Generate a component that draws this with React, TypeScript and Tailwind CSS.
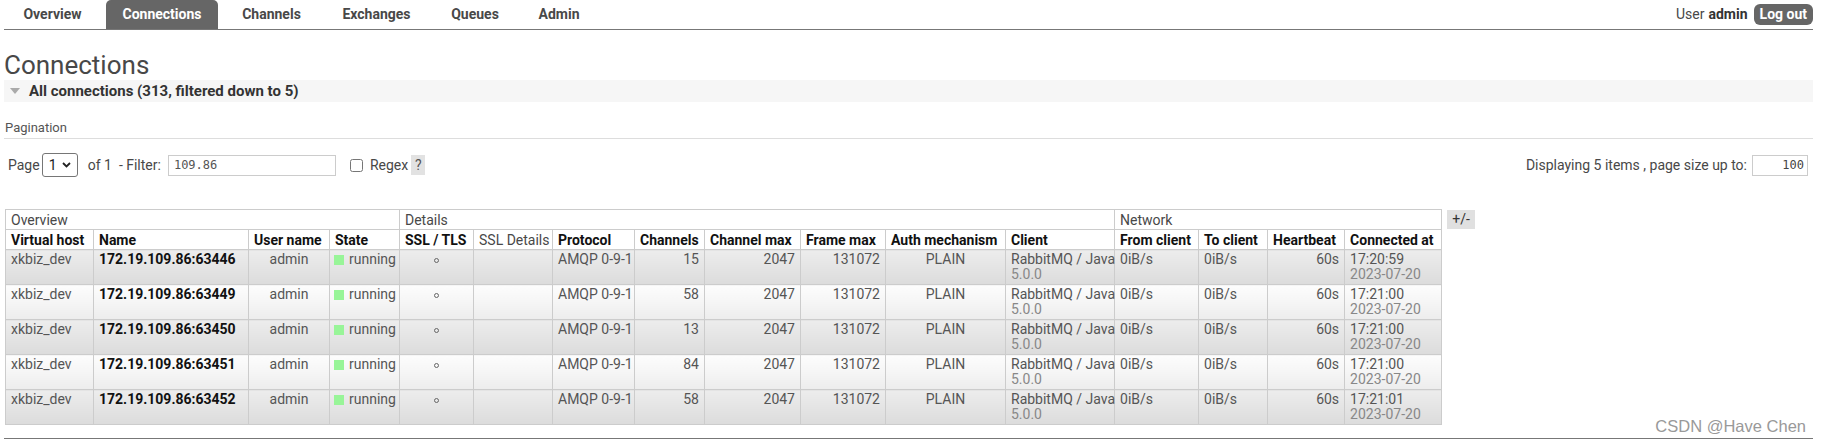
import React from 'react';

const tabs = [
  { label: 'Overview', cls: 'w-[95px]' },
  { label: 'Connections', cls: 'w-[112px] bg-[#666] text-white rounded-t-[5px]' },
  { label: 'Channels', cls: 'w-[95px]' },
  { label: 'Exchanges', cls: 'w-[103px]' },
  { label: 'Queues', cls: 'w-[82px]' },
  { label: 'Admin', cls: 'w-[74px]' },
];

const cols = [88, 155, 81, 70, 74, 79, 82, 70, 96, 85, 120, 109, 84, 69, 77, 97];

const rows = [
  { port: '63446', ch: '15', time: '17:20:59' },
  { port: '63449', ch: '58', time: '17:21:00' },
  { port: '63450', ch: '13', time: '17:21:00' },
  { port: '63451', ch: '84', time: '17:21:00' },
  { port: '63452', ch: '58', time: '17:21:01' },
];

const headers: { label: string; bold: boolean }[] = [
  { label: 'Virtual host', bold: true },
  { label: 'Name', bold: true },
  { label: 'User name', bold: true },
  { label: 'State', bold: true },
  { label: 'SSL / TLS', bold: true },
  { label: 'SSL Details', bold: false },
  { label: 'Protocol', bold: true },
  { label: 'Channels', bold: true },
  { label: 'Channel max', bold: true },
  { label: 'Frame max', bold: true },
  { label: 'Auth mechanism', bold: true },
  { label: 'Client', bold: true },
  { label: 'From client', bold: true },
  { label: 'To client', bold: true },
  { label: 'Heartbeat', bold: true },
  { label: 'Connected at', bold: true },
];

export default function App() {
  return (
    <div className="relative w-[1827px] h-[442px] overflow-hidden bg-white pl-[4px] pr-[14px] font-['Roboto',sans-serif] text-[14px] text-[#484848]">
      {/* Top navigation */}
      <div className="flex h-[30px] items-start justify-between border-b border-[#777]">
        <ul className="flex gap-[6px] pl-[1px] font-bold">
          {tabs.map((t) => (
            <li key={t.label} className={`flex h-[29px] items-center justify-center ${t.cls}`}>
              {t.label}
            </li>
          ))}
        </ul>
        <div className="flex h-[29px] items-center">
          <span>User</span>
          <span className="ml-[4px] font-bold text-[#333]">admin</span>
          <span className="ml-[6px] h-[21px] rounded-[6px] bg-[#666] px-[6px] font-bold leading-[21px] text-white">
            Log out
          </span>
        </div>
      </div>

      {/* Title */}
      <h1 className="mt-[20px] h-[30px] text-[26px] leading-[30px] font-normal text-[#484848]">Connections</h1>

      {/* Section bar */}
      <div className="flex h-[22px] items-center bg-[#f6f6f6]">
        <span className="ml-[6px] h-0 w-0 border-x-[5px] border-t-[6px] border-x-transparent border-t-[#aaa]" />
        <span className="ml-[9px] text-[15px] font-bold text-[#333]">All connections (313, filtered down to 5)</span>
      </div>

      {/* Pagination label */}
      <div className="mt-[18px] border-b border-[#ddd] pb-[2px] pl-[1px] text-[13px] leading-[16px] text-[#555]">
        Pagination
      </div>

      {/* Pagination row */}
      <div className="mt-[14px] flex h-[24px] items-center justify-between">
        <div className="flex items-center pl-[4px]">
          <span>Page</span>
          <div className="ml-[2px] flex h-[24px] w-[36px] items-center justify-between rounded-[3px] border border-[#767676] px-[6px] text-[#222]">
            <span>1</span>
            <svg width="9" height="6" viewBox="0 0 9 6" fill="none">
              <path d="M1 1l3.5 3.5L8 1" stroke="#222" strokeWidth="1.8" />
            </svg>
          </div>
          <span className="ml-[10px]">of 1</span>
          <span className="ml-[7px]">- Filter:</span>
          <div className="ml-[7px] flex h-[21px] w-[168px] items-center border border-[#ccc] px-[5px] font-['DejaVu_Sans_Mono',monospace] text-[12px] text-[#555]">
            109.86
          </div>
          <input type="checkbox" readOnly className="ml-[14px] h-[13px] w-[13px]" />
          <span className="ml-[7px]">Regex</span>
          <span className="ml-[3px] flex h-[20px] w-[14px] items-center justify-center bg-[#e2e2e2] text-[#555]">?</span>
        </div>
        <div className="flex items-center">
          <span>Displaying 5 items , page size up to:</span>
          <div className="ml-[5px] mr-[5px] flex h-[21px] w-[56px] items-center justify-end border border-[#ccc] pr-[3px] font-['DejaVu_Sans_Mono',monospace] text-[12px] text-[#444]">
            100
          </div>
        </div>
      </div>

      {/* Table */}
      <div className="mt-[32px] flex items-start">
        <table className="ml-[1px] w-[1436px] table-fixed border-collapse">
          <colgroup>
            {cols.map((w, i) => (
              <col key={i} width={w} />
            ))}
          </colgroup>
          <thead>
            <tr>
              <td colSpan={4} className="h-[20px] border border-[#ccc] px-[5px] py-0 leading-[18px]">Overview</td>
              <td colSpan={8} className="h-[20px] border border-[#ccc] px-[5px] py-0 leading-[18px]">Details</td>
              <td colSpan={4} className="h-[20px] border border-[#ccc] px-[5px] py-0 leading-[18px]">Network</td>
            </tr>
            <tr>
              {headers.map((h) => (
                <th
                  key={h.label}
                  className={`h-[20px] overflow-hidden whitespace-nowrap border border-[#ccc] px-[5px] py-0 text-left leading-[18px] ${
                    h.bold ? 'font-bold text-[#111]' : 'font-normal text-[#484848]'
                  }`}
                >
                  {h.label}
                </th>
              ))}
            </tr>
          </thead>
          <tbody>
            {rows.map((r, i) => {
              const bg = i % 2 === 0 ? 'bg-linear-to-b from-[#ededed] to-[#dcdcdc]' : 'bg-linear-to-b from-[#fdfdfd] to-[#ededed]';
              const td = `h-[35px] border border-[#ccc] px-[5px] pt-[2px] pb-0 align-top leading-[15px] whitespace-nowrap text-[#555] ${bg}`;
              return (
                <tr key={r.port}>
                  <td className={td}>xkbiz_dev</td>
                  <td className={`${td} font-bold !text-[#111]`}>172.19.109.86:{r.port}</td>
                  <td className={`${td} text-center`}>admin</td>
                  <td className={`${td} !pl-[4px] !pr-[2px]`}>
                    <span className="mr-[5px] inline-block h-[10px] w-[10px] bg-[#98f598] align-[-1px]" />
                    running
                  </td>
                  <td className={`${td} text-center`}>
                    <span className="inline-block h-[5px] w-[5px] rounded-full border border-[#666] align-middle" />
                  </td>
                  <td className={td}></td>
                  <td className={td}>AMQP 0-9-1</td>
                  <td className={`${td} text-right`}>{r.ch}</td>
                  <td className={`${td} text-right`}>2047</td>
                  <td className={`${td} text-right`}>131072</td>
                  <td className={`${td} text-center`}>PLAIN</td>
                  <td className={td}>
                    <div>RabbitMQ / Java</div>
                    <div className="text-[#888]">5.0.0</div>
                  </td>
                  <td className={td}>0iB/s</td>
                  <td className={td}>0iB/s</td>
                  <td className={`${td} text-right`}>60s</td>
                  <td className={td}>
                    <div>{r.time}</div>
                    <div className="text-[#888]">2023-07-20</div>
                  </td>
                </tr>
              );
            })}
          </tbody>
        </table>
        <div className="ml-[5px] mt-[1px] flex h-[19px] w-[28px] items-center justify-center bg-[#e0e0e0] text-[#333]">
          +/-
        </div>
      </div>

      {/* Bottom rule */}
      <div className="mt-[13px] border-t border-[#777]" />

      {/* Watermark */}
      <div className="absolute right-[21px] top-[416px] font-['Liberation_Sans',sans-serif] text-[16.5px] leading-[20px] text-[#999]">
        CSDN @Have Chen
      </div>
    </div>
  );
}
